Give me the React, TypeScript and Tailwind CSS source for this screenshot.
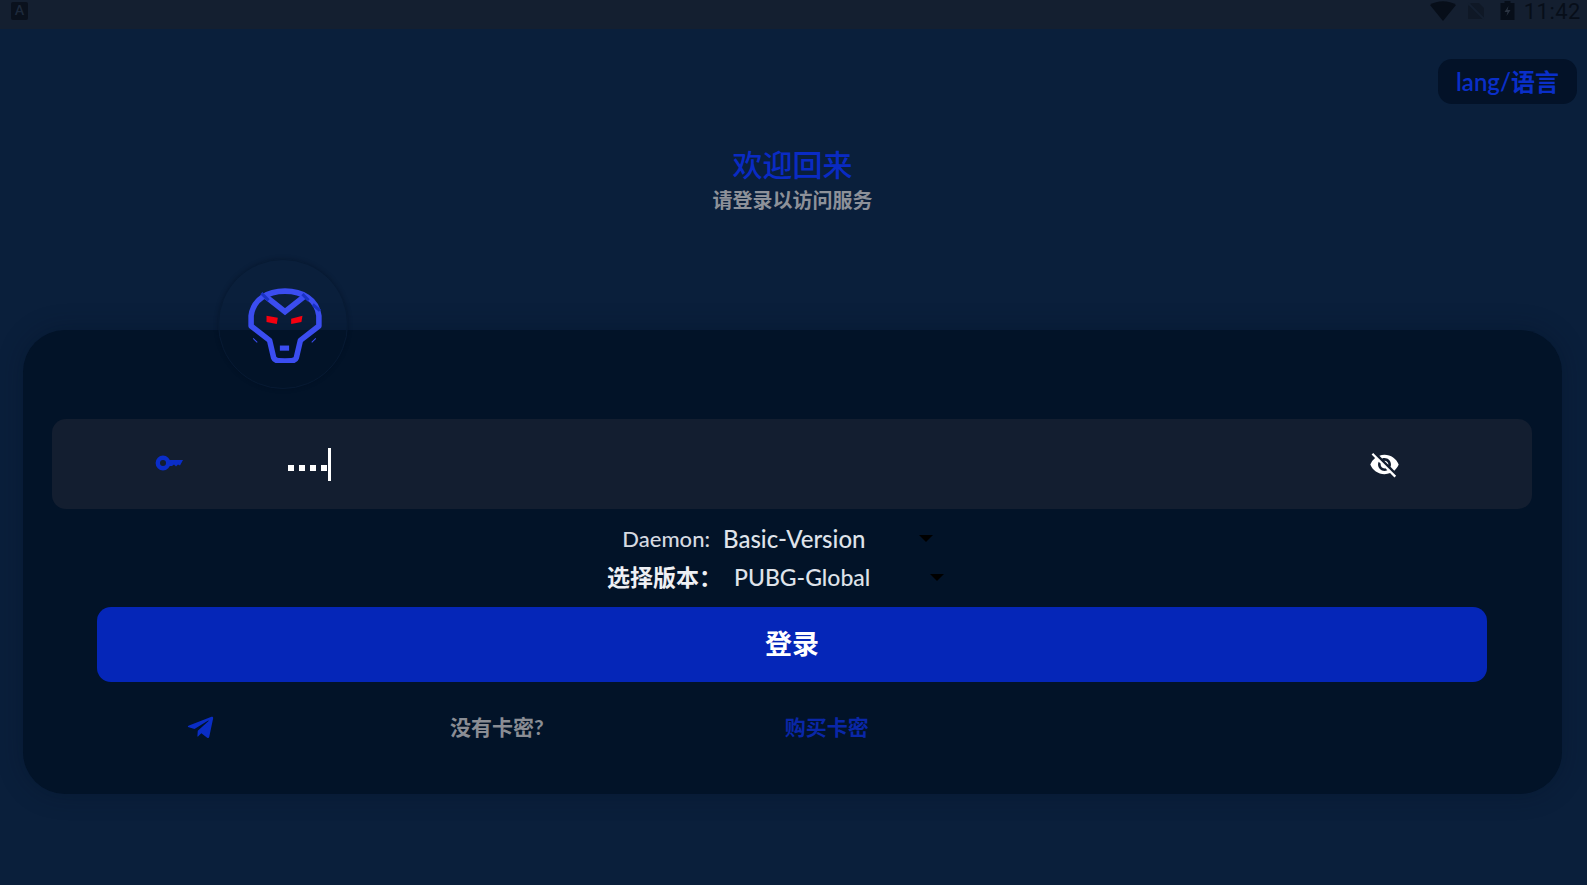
import { FaTelegramPlane } from "react-icons/fa";
import { MdVisibilityOff } from "react-icons/md";

const font = { fontFamily: 'Lato, "Noto Sans CJK SC", sans-serif' };

function StatusBar() {
  return (
    <div className="flex h-[29px] items-start justify-between bg-[#141f30] pl-[11px] pr-[6px] text-[#070e19]">
      <div className="mt-[2px] flex h-[18px] w-[17px] items-center justify-center rounded-[2px] bg-[#0a111d] text-[13px] font-bold text-[#1e2a3c]">
        A
      </div>
      <div className="flex items-start">
        <svg width="26" height="20" viewBox="0 0 26 20" className="mt-[1px]">
          <path d="M0 4 C7 -1 19 -1 26 4 L13 20 Z" fill="currentColor" />
        </svg>
        <svg width="18" height="18" viewBox="0 0 18 18" className="ml-[11px] mt-[2px]">
          <path d="M4 1 H12 L17 6 V17 H1 V4 Z" fill="#0f1826" />
          <path d="M1 1 L17 17" stroke="#141f30" strokeWidth="2" />
        </svg>
        <svg width="15" height="19" viewBox="0 0 14 19" className="ml-[15px] mt-[1px]">
          <path d="M4 0 H10 V2 H14 V19 H0 V2 H4 Z" fill="currentColor" />
          <path d="M8 5 L4 11 H7 L6 15 L10 9 H7 Z" fill="#2b3442" />
        </svg>
        <span className="ml-[9px] text-[22px] leading-[24px] tracking-[0.5px]" style={{ fontFamily: "Roboto, sans-serif" }}>
          11:42
        </span>
      </div>
    </div>
  );
}

function WolfLogo() {
  return (
    <svg width="76" height="76" viewBox="48 43 74 74" className="ml-[4px] mt-[1px]">
      <path
        d="M52 71 C54 55 68 47 85 47 C102 47 116 55 118 71 V81 L100 95 L96 112 C95 115 92 115 85 115 C78 115 75 115 74 112 L70 95 L52 81 Z"
        fill="none"
        stroke="#3b4df0"
        strokeWidth="5.4"
        strokeLinejoin="round"
      />
      <path d="M66 52 L85 67 L104 52" fill="none" stroke="#3b4df0" strokeWidth="5.4" />
      <path d="M62 49 L69 56 M102 50 L108 56 M112 60 L119 66" stroke="#1a32c4" strokeWidth="3" />
      <path d="M67 71 L78 73 L77 79 L67 77 Z M102 71 L91 74 L91 79 L101 77 Z" fill="#f5000f" />
      <rect x="80" y="100" width="9" height="5" fill="#3b4df0" />
      <path d="M54 93 L58 97 M115 93 L111 97" stroke="#3b4df0" strokeWidth="1" />
    </svg>
  );
}

function KeyIcon() {
  return (
    <svg width="28" height="18" viewBox="0 0 28 18" className="mt-[-2px]">
      <circle cx="8" cy="9" r="5.2" fill="none" stroke="#0a2dc8" strokeWidth="4.4" />
      <path d="M13 6 H28 L25 11.5 L23 10.5 L21 12.5 L19 10.5 L17 12 H13 Z" fill="#0a2dc8" />
    </svg>
  );
}

function SelectRow(props: { label: string; value: string; labelClass: string; valueGap: string }) {
  return (
    <div className="flex h-[39px] items-center font-medium leading-none">
      <span className={`text-right ${props.labelClass}`}>{props.label}</span>
      <span className={`${props.valueGap} w-[196px] text-[#dfe3ea]`}>{props.value}</span>
      <span className="h-0 w-0 border-x-[7px] border-t-[7px] border-x-transparent border-t-black" />
    </div>
  );
}

export default function App() {
  return (
    <div className="flex h-[885px] flex-col overflow-hidden bg-[#0a1f3b]" style={font}>
      <StatusBar />

      <div className="flex justify-end pr-[10px] pt-[30px]">
        <div className="flex h-[45px] w-[139px] items-center justify-center rounded-[14px] bg-[#031228] pt-[1px] text-[24px] font-semibold text-[#0a2fc9]">
          lang/语言
        </div>
      </div>

      <div className="mt-[41px] flex flex-col items-center pr-[2px]">
        <h1 className="text-[30px] font-medium leading-[38px] text-[#0a2bc4]">欢迎回来</h1>
        <p className="mt-[2px] text-[20px] font-bold leading-[30px] text-[#8d9199]">请登录以访问服务</p>
      </div>

      <div className="relative ml-[23px] mr-[25px] mt-[115px] h-[464px] rounded-[42px] bg-[#021328] pl-[29px] pr-[30px] pt-[89px] shadow-[0_0_24px_rgba(2,17,36,0.35)]">
        <div className="absolute left-[195px] top-[-71px] flex h-[130px] w-[130px] items-center justify-center rounded-full border border-[#071a33] shadow-[0_0_4px_rgba(2,12,28,0.4)]">
          <WolfLogo />
        </div>

        <div className="flex h-[90px] items-center justify-between rounded-[14px] bg-[#131e30] pl-[103px] pr-[132px]">
          <div className="flex items-center">
            <KeyIcon />
            <div className="ml-[105px] mt-[8px] flex gap-[5px]">
              <span className="h-[6px] w-[6px] bg-white" />
              <span className="h-[6px] w-[6px] bg-white" />
              <span className="h-[6px] w-[6px] bg-white" />
              <span className="h-[6px] w-[6px] bg-white" />
            </div>
            <span className="ml-[1px] h-[33px] w-[3px] bg-white" />
          </div>
          <MdVisibilityOff className="text-[31px] text-white" />
        </div>

        <div className="-ml-[29px] -mr-[30px] mt-[10px]">
          <SelectRow label="Daemon:" value="Basic-Version" labelClass="w-[687px] text-[22px] text-[#d6dae1]" valueGap="ml-[13px] text-[24px]" />
          <SelectRow label="选择版本：" value="PUBG-Global" labelClass="w-[699px] text-[23px] font-bold text-[#eef0f4]" valueGap="ml-[12px] text-[23px]" />
        </div>

        <button className="mx-[45px] mt-[10px] flex h-[75px] w-[1390px] items-center justify-center rounded-[14px] bg-[#0526b8] text-[27px] font-bold text-white">
          登录
        </button>

        <div className="mt-[30px] flex h-[30px] items-center pl-[134px] text-[21px] font-bold">
          <FaTelegramPlane className="text-[29px] text-[#0a2dc4]" />
          <span className="ml-[235px] text-[#8a8d94]">没有卡密?</span>
          <span className="ml-[241px] text-[#0a27a8]">购买卡密</span>
        </div>
      </div>
    </div>
  );
}
